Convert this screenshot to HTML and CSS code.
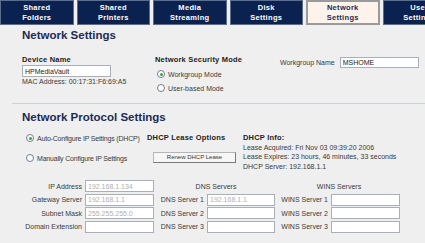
FILE: index.html
```html
<!DOCTYPE html>
<html lang="en">

<head>
    <meta charset="UTF-8">
    <title>Network Settings</title>
    <link rel="stylesheet" href="styles.css">
</head>

<body>

    <div class="tabs">
        <div class="tab">Shared<br>Folders</div>
        <div class="tab">Shared<br>Printers</div>
        <div class="tab">Media<br>Streaming</div>
        <div class="tab">Disk<br>Settings</div>
        <div class="tab active">Network<br>Settings</div>
        <div class="tab">User<br>Settings</div>
    </div>

    <div class="page">
        <h1 class="first">Network Settings</h1>

        <div class="general">
            <div class="col-device">
                <div class="label">Device Name</div>
                <input class="text device" type="text" value="HPMediaVault">
                <div class="mac">MAC Address: 00:17:31:F6:69:A5</div>
            </div>
            <div class="col-security">
                <div class="label">Network Security Mode</div>
                <div class="radio first-radio"><span class="dot checked"></span>Workgroup Mode</div>
                <div class="radio second-radio"><span class="dot"></span>User-based Mode</div>
            </div>
            <div class="col-workgroup">
                <span>Workgroup Name</span>
                <input class="text workgroup" type="text" value="MSHOME">
            </div>
        </div>
    </div>

    <hr class="divider">

    <div class="page">
        <h1>Network Protocol Settings</h1>

        <div class="protocol">
            <div class="col-mode">
                <div class="radio"><span class="dot checked"></span>Auto-Configure IP Settings (DHCP)</div>
                <div class="radio second-radio"><span class="dot"></span>Manually Configure IP Settings</div>
            </div>
            <div class="col-lease">
                <div class="label">DHCP Lease Options</div>
                <button class="renew">Renew DHCP Lease</button>
            </div>
            <div class="col-info">
                <div class="label">DHCP Info:</div>
                <div>Lease Acquired: Fri Nov 03 09:39:20 2006</div>
                <div>Lease Expires: 23 hours, 46 minutes, 33 seconds</div>
                <div>DHCP Server: 192.168.1.1</div>
            </div>
        </div>
    </div>

    <div class="servers">
        <span class="key">IP Address</span>
        <input class="text field" value="192.168.1.134" disabled>
        <div class="head">DNS Servers</div>
        <div class="head">WINS Servers</div>

        <span class="key">Gateway Server</span>
        <input class="text field" value="192.168.1.1" disabled>
        <span class="key">DNS Server 1</span>
        <input class="text field" value="192.168.1.1" disabled>
        <span class="key">WINS Server 1</span>
        <input class="text field">

        <span class="key">Subnet Mask</span>
        <input class="text field" value="255.255.255.0" disabled>
        <span class="key">DNS Server 2</span>
        <input class="text field">
        <span class="key">WINS Server 2</span>
        <input class="text field">

        <span class="key">Domain Extension</span>
        <input class="text field">
        <span class="key">DNS Server 3</span>
        <input class="text field">
        <span class="key">WINS Server 3</span>
        <input class="text field">
    </div>

</body>

</html>
```

FILE: styles.css
```css
/* Reset */
* {
    box-sizing: border-box;
    margin: 0;
    padding: 0;
}

body {
    width: 425px;
    height: 243px;
    overflow: hidden;
    background-color: #efefef;
    color: #3a3a3a;
    font-family: 'Liberation Sans', Arial, sans-serif;
    font-size: 7px;
    line-height: 9px;
}

/* Tabs */
.tabs {
    display: flex;
    gap: 3px;
    height: 25px;
}

.tab {
    flex: 0 0 73.5px;
    background-color: #0b2250;
    border: 1px solid #5d6d8c;
    color: #fff;
    font-weight: bold;
    font-size: 7.5px;
    line-height: 10px;
    letter-spacing: 0.3px;
    text-align: center;
    padding-top: 2px;
}

.tab.active {
    background-color: #fdf3ea;
    border: 2px solid #9a9a9a;
    color: #1c2b55;
    padding-top: 1px;
}

/* Page body */
.page {
    padding-left: 22px;
}

h1 {
    font-size: 11.5px;
    line-height: 15px;
    color: #1c2b55;
    margin-top: 6px;
}

h1.first {
    margin-top: 3px;
}

.label {
    font-weight: bold;
    font-size: 7.5px;
    letter-spacing: 0.2px;
    color: #222;
}

.general {
    display: flex;
    margin-top: 12px;
    height: 48px;
}

.col-device {
    width: 133px;
}

.col-security {
    width: 125px;
}

.col-security .radio {
    margin-left: 2px;
}

.first-radio {
    margin-top: 5px;
}

.second-radio {
    margin-top: 4px;
}

.col-workgroup {
    display: flex;
    align-items: center;
    gap: 5px;
    height: 11px;
    margin-top: 2px;
}

.text {
    display: block;
    height: 12px;
    background-color: #fff;
    border: 1px solid #a9afb8;
    font-family: 'Liberation Sans', Arial, sans-serif;
    font-size: 7px;
    color: #222;
    padding: 0 2px;
}

.device {
    width: 89px;
    margin-top: 1px;
}

.workgroup {
    width: 79px;
    height: 11px;
}

.mac {
    line-height: 8px;
    margin-top: 1px;
}

.radio {
    display: flex;
    align-items: center;
    gap: 3px;
    height: 10px;
}

.dot {
    flex: 0 0 8px;
    width: 8px;
    height: 8px;
    border: 1px solid #6d7f96;
    border-radius: 50%;
    background-color: #fff;
    position: relative;
}

.dot.checked::after {
    content: "";
    position: absolute;
    left: 1.5px;
    top: 1.5px;
    width: 3px;
    height: 3px;
    border-radius: 50%;
    background-color: #3ca23c;
}

.divider {
    border: none;
    border-top: 1px solid #c9d2de;
    margin-left: 12px;
}

/* Protocol */
.protocol {
    display: flex;
    margin-top: 8px;
    height: 47px;
}

.col-mode {
    width: 125px;
    letter-spacing: -0.2px;
    white-space: nowrap;
}

.col-mode .radio {
    margin-left: 4px;
}

.col-mode .second-radio {
    margin-top: 10px;
}

.col-lease {
    width: 96px;
}

.renew {
    display: block;
    width: 83px;
    height: 11px;
    margin-top: 10px;
    margin-left: 6px;
    background-color: #f6f6f6;
    border: 1px solid #b5b5b5;
    border-right-color: #7a7a7a;
    border-bottom-color: #7a7a7a;
    font-family: 'Liberation Sans', Arial, sans-serif;
    font-size: 6px;
    line-height: 9px;
    color: #333;
}

.col-info {
    line-height: 9.5px;
}

/* Server grid */
.servers {
    display: grid;
    grid-template-columns: 82px 69px 47px 68px 50px 69px;
    grid-auto-rows: 12px;
    column-gap: 3px;
    row-gap: 1.5px;
    align-items: center;
}

.key {
    text-align: right;
    white-space: nowrap;
}

.head {
    grid-column: span 2;
    text-align: center;
}

.field {
    width: 100%;
    height: 12px;
}

.field:disabled {
    color: #b0b0b0;
    background-color: #fff;
}
```
